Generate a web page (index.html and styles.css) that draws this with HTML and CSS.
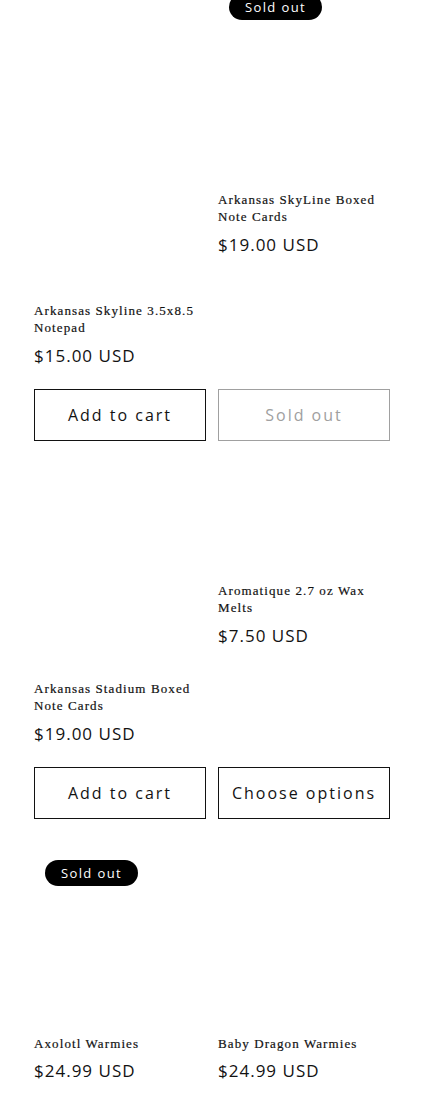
FILE: index.html
```html
<!DOCTYPE html>
<html lang="en">
<head>
    <meta charset="UTF-8">
    <meta name="viewport" content="width=device-width, initial-scale=1.0">
    <title>Products</title>
    <link rel="stylesheet" href="styles.css">
</head>
<body>

    <ul class="product-grid">
        <!-- row 1 -->
        <li class="card">
            <div class="card-media media-row1-left"></div>
            <div class="card-info">
                <h3 class="card-title">Arkansas Skyline 3.5x8.5 Notepad</h3>
                <div class="card-price">$15.00 USD</div>
            </div>
            <button class="quick-add" type="button">Add to cart</button>
        </li>
        <li class="card">
            <div class="card-media media-row1-right">
                <span class="badge">Sold out</span>
            </div>
            <div class="card-info">
                <h3 class="card-title">Arkansas SkyLine Boxed Note Cards</h3>
                <div class="card-price">$19.00 USD</div>
            </div>
            <button class="quick-add" type="button" disabled>Sold out</button>
        </li>

        <!-- row 2 -->
        <li class="card">
            <div class="card-media media-row2-left"></div>
            <div class="card-info">
                <h3 class="card-title">Arkansas Stadium Boxed Note Cards</h3>
                <div class="card-price">$19.00 USD</div>
            </div>
            <button class="quick-add" type="button">Add to cart</button>
        </li>
        <li class="card">
            <div class="card-media media-row2-right"></div>
            <div class="card-info">
                <h3 class="card-title">Aromatique 2.7 oz Wax Melts</h3>
                <div class="card-price">$7.50 USD</div>
            </div>
            <button class="quick-add" type="button">Choose options</button>
        </li>

        <li class="card">
            <div class="card-media media-row3">
                <span class="badge badge-low">Sold out</span>
            </div>
            <div class="card-info">
                <h3 class="card-title">Axolotl Warmies</h3>
                <div class="card-price price-tight">$24.99 USD</div>
            </div>
        </li>
        <li class="card">
            <div class="card-media media-row3"></div>
            <div class="card-info">
                <h3 class="card-title">Baby Dragon Warmies</h3>
                <div class="card-price price-tight">$24.99 USD</div>
            </div>
        </li>
    </ul>

</body>
</html>
```

FILE: styles.css
```css
body {
    margin: 0;
    background-color: #ffffff;
    color: #121212;
    font-family: "Open Sans", "DejaVu Sans", sans-serif;
}
.product-grid {
    list-style: none;
    margin: -37px 0 0;
    padding: 0 35px 0 34px;
    display: grid;
    grid-template-columns: 1fr 1fr;
    column-gap: 12px;
    row-gap: 12px;
}
.card {
    display: flex;
    flex-direction: column;
}
.card-media {
    position: relative;
}
.media-row1-left {
    height: 339px;
}
.media-row1-right {
    height: 228px;
}
.media-row2-left {
    height: 227px;
}
.media-row2-right {
    height: 129px;
}
.media-row3 {
    height: 204px;
}
.card-info {
    padding-bottom: 21px;
}
.badge {
    position: absolute;
    top: 31px;
    left: 11px;
    width: 93px;
    height: 26px;
    line-height: 26px;
    border-radius: 13px;
    background-color: #000;
    color: #fff;
    font-size: 13px;
    letter-spacing: 1.4px;
    text-align: center;
}
.badge-low {
    top: 29px;
}
.card-title {
    margin: 0;
    font-family: "Liberation Serif", "DejaVu Serif", serif;
    font-size: 13px;
    font-weight: normal;
    line-height: 17px;
    letter-spacing: 1.1px;
    color: #121212;
    -webkit-text-stroke: 0.2px #121212;
}
.card-price {
    margin-top: 8px;
    font-size: 17px;
    line-height: 24px;
    letter-spacing: 1px;
}
.price-tight {
    margin-top: 7px;
}
.quick-add {
    margin-top: auto;
    height: 52px;
    border: 1px solid #121212;
    background-color: #fff;
    color: #121212;
    font-family: inherit;
    font-size: 16px;
    letter-spacing: 2px;
    cursor: pointer;
}
.quick-add:disabled {
    border-color: #a0a0a0;
    color: #a0a0a0;
    cursor: default;
}
```
